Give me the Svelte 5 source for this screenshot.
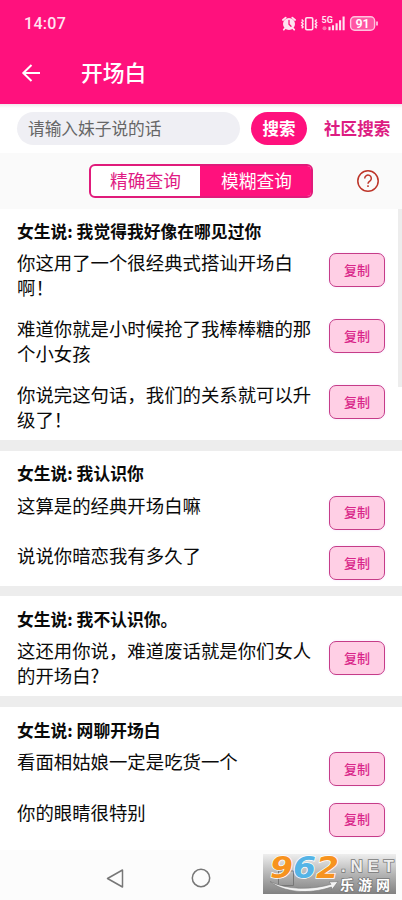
<script lang="ts">
  let keyword = $state("");
  let mode = $state("fuzzy");

  const groups = [
    {
      title: "我觉得我好像在哪见过你",
      replies: [
        "你这用了一个很经典式搭讪开场白啊！",
        "难道你就是小时候抢了我棒棒糖的那个小女孩",
        "你说完这句话，我们的关系就可以升级了！",
      ],
    },
    { title: "我认识你", replies: ["这算是的经典开场白嘛", "说说你暗恋我有多久了"] },
    { title: "我不认识你。", replies: ["这还用你说，难道废话就是你们女人的开场白?"] },
    { title: "网聊开场白", replies: ["看面相姑娘一定是吃货一个", "你的眼睛很特别"] },
  ];

  function copy(text: string) {
    navigator.clipboard?.writeText(text);
  }
</script>

<div class="screen">
  <header>
    <div class="status">
      <span class="time">14:07</span>
      <svg class="indicators" width="100" height="18" viewBox="0 0 100 18">
        <!-- alarm -->
        <g stroke="#ffe3f1" fill="none" stroke-linecap="round">
          <circle cx="8" cy="9" r="6" fill="#ffe3f1" stroke="none" />
          <path d="M1.9 5 4.7 2.6M14.1 5 11.3 2.6M3.9 13.5 2.8 14.7M12.1 13.5l1.1 1.2" stroke-width="1.8" />
          <path d="M8 5.5v3.7l2 2" stroke="#ff117d" stroke-width="1.3" />
        </g>
        <!-- vibrate -->
        <g stroke="#ffe3f1" fill="none" stroke-width="1.4">
          <rect x="24.7" y="2.7" width="7" height="12" rx="1.2" stroke-width="1.6" />
          <path d="M20.7 4.5l1.4 1.5-1.4 1.5 1.4 1.5-1.4 1.5 1.4 1.5-1.4 1.3M35.7 4.5l-1.4 1.5 1.4 1.5-1.4 1.5 1.4 1.5-1.4 1.5 1.4 1.3" />
        </g>
        <!-- signal -->
        <text x="40.500" y="8.300" class="net">5G</text>
        <circle cx="43.5" cy="13.3" r="2" fill="#ff6fb0" />
        <path d="M48.5 15.3v-3.5M52 15.3v-5M55.6 15.3V8.2M59.1 15.3V5.3M62.6 15.3V1.5" stroke="#ffe3f1" stroke-width="2.1" />
        <!-- battery -->
        <rect x="69.6" y="1.7" width="24" height="13.6" rx="4" fill="#ff56a3" stroke="#ffc3df" stroke-width="1.4" />
        <path d="M96 6.5v4" stroke="#ffc3df" stroke-width="1.8" />
        <text x="81.6" y="12.9" text-anchor="middle" class="level">91</text>
      </svg>
    </div>
    <div class="appbar">
      <button class="back" aria-label="返回">
        <svg width="20" height="20" viewBox="0 0 20 20" fill="none" stroke="#fff" stroke-width="2">
          <path d="M19 10H2.5M10.5 2 2.3 10l8.2 8" />
        </svg>
      </button>
      <h1>开场白</h1>
    </div>
  </header>

  <div class="search">
    <input bind:value={keyword} placeholder="请输入妹子说的话" />
    <button class="go">搜索</button>
    <button class="community">社区搜索</button>
  </div>

  <div class="modes">
    <div class="segment">
      <button class:active={mode === "exact"} onclick={() => (mode = "exact")}>精确查询</button>
      <button class:active={mode === "fuzzy"} onclick={() => (mode = "fuzzy")}>模糊查询</button>
    </div>
    <svg class="help" width="24" height="24" viewBox="0 0 24 24" fill="none" stroke="#bd3428" stroke-width="1.5">
      <circle cx="12" cy="12" r="10.2" />
      <path d="M8.7 9.4a3.3 3.3 0 1 1 5.3 2.6c-1.2.9-2 1.4-2 2.8M12 16.3v1.7" />
    </svg>
  </div>

  <main>
    {#each groups as group}
      <section>
        <h2>女生说: {group.title}</h2>
        {#each group.replies as reply}
          <div class="reply">
            <p>{reply}</p>
            <button class="copy" onclick={() => copy(reply)}>复制</button>
          </div>
        {/each}
      </section>
    {/each}
    <div class="thumb"></div>
  </main>

  <nav>
    <svg width="402" height="50" viewBox="0 0 402 50" fill="none" stroke="#777" stroke-width="1.5" stroke-linejoin="round">
      <path d="M122.5 20v17l-15-8.5z" />
      <circle cx="201" cy="28" r="8.7" />
    </svg>
    <svg class="mark" width="133" height="40" viewBox="0 0 133 40">
      <defs>
        <linearGradient id="shade" x2="0" y2="1">
          <stop offset="0" stop-color="#eee" />
          <stop offset="0.5" stop-color="#b5b5b5" />
          <stop offset="1" stop-color="#818181" />
        </linearGradient>
      </defs>
      <rect width="133" height="40" fill="url(#shade)" />
      <path d="M15.5 17h15v14.5h-15z" fill="none" stroke="#777" />
      <g class="digits">
        <text x="7" y="24" textLength="23" lengthAdjust="spacingAndGlyphs" fill="#f7931e">9</text>
        <text x="30" y="24" textLength="23" lengthAdjust="spacingAndGlyphs" fill="#55b4e6">6</text>
        <text x="53" y="24" textLength="23" lengthAdjust="spacingAndGlyphs" fill="#f7931e">2</text>
      </g>
      <path d="M7 27.5c17 8.500 42 8.500 61 2.800l-2-2.300 9-.5-6 8-.5-2.500C45 41 20 38 7 27.500z" fill="#f4f4f4" stroke="#777" stroke-width=".6" />
      <text class="net-name" x="78" y="18" textLength="53" lengthAdjust="spacing">.NET</text>
      <text class="site" x="77" y="36" textLength="50">乐游网</text>
    </svg>
  </nav>
</div>

<style>
  :global(body) { margin: 0; }
  .screen { width: 402px; height: 900px; display: flex; flex-direction: column; overflow: hidden;
    background: #fff; color: #0a0a0a; font-family: "Noto Sans CJK SC", sans-serif; }
  button { border: 0; padding: 0; background: none; font-family: inherit; cursor: pointer; }
  h1, h2, p { margin: 0; }

  header { height: 104px; flex: none; box-sizing: border-box; background: #ff117d; color: #fff; }
  .status { display: flex; justify-content: space-between; align-items: center;
    height: 48px; padding: 0 21px 0 24px; }
  .time { font: 500 16px/20px Roboto, sans-serif; letter-spacing: 0.3px; color: #ffe3f1; }
  .net { font: 700 9px Roboto, sans-serif; fill: #ffe3f1; }
  .level { font: 600 12.5px Roboto, sans-serif; fill: #fff; }
  .appbar { display: flex; align-items: center; height: 49px; padding-left: 21px; }
  .back { display: flex; width: 60px; }
  h1 { padding-bottom: 2px; font-size: 21.8px; line-height: 30px; font-weight: 500; }

  .search { display: flex; align-items: center; flex: none; box-sizing: border-box; height: 49px;
    padding: 0 11px 0 17px; background: linear-gradient(#f0e8ec, #fff 4px); }
  input { width: 223px; height: 33px; box-sizing: border-box; border: 0; border-radius: 17px;
    padding: 0 11px 2px; background: #efeff4; font: 16.7px "Noto Sans CJK SC", sans-serif; outline: none; }
  input::placeholder { color: #666; opacity: 1; }
  .go { width: 56px; height: 33px; margin: 0 17px 0 11px; padding-bottom: 2px; border-radius: 17px;
    background: #ff117d; color: #fff; font-size: 16.5px; font-weight: 700; }
  .community { padding-bottom: 2px; color: #dd1c82; font-size: 16.6px; font-weight: 700;
    white-space: nowrap; }

  .modes { display: flex; align-items: center; flex: none; height: 56px; padding-left: 89px;
    background: #fafafa; }
  .segment { display: flex; width: 224px; height: 34px; box-sizing: border-box; overflow: hidden;
    border: 2px solid #e01b7b; border-radius: 6px; background: #fff; }
  .segment button { flex: 1; color: #e01b84; font-size: 17.7px; line-height: 28px; padding-bottom: 2px; }
  .segment .active { background: #ff117d; color: #fff; }
  .segment button:last-child { padding-left: 2px; }
  .help { margin-left: 43px; }

  main { position: relative; flex: none; height: 641px; overflow: hidden; background: #ededed; }
  section { padding: 10.5px 17px 0; background: #fff; }
  section + section { margin-top: 10.7px; }
  section:first-child { padding-top: 9.5px; }
  section:nth-last-child(2) { padding-bottom: 20px; }
  h2 { height: 32.5px; font-size: 16.8px; line-height: 25px; font-weight: 700; }
  .reply { display: flex; justify-content: space-between; align-items: flex-start; }
  .reply + .reply { margin-top: 9px; }
  p { width: 298px; margin-top: -1px; padding-bottom: 9px; font-size: 18.4px; line-height: 24.5px; }
  .copy { width: 56px; height: 34px; flex: none; box-sizing: border-box; margin: 2px 0 5.5px;
    padding-bottom: 2px; border: 1.5px solid #c63c88; border-radius: 7px; background: #ffcfe5;
    color: #d9268a; font-size: 13px; font-weight: 500; box-shadow: 0 0 3px #f5e8ff; }
  .thumb { position: absolute; top: 0; right: 0; width: 4px; height: 178px; background: #ededed; }

  nav { position: relative; flex: none; height: 50px; background: #fcfcfc; }
  .mark { position: absolute; left: 263px; top: 4px; overflow: visible; }
  .digits { font: italic 700 31px "DejaVu Sans", sans-serif; stroke: #fff; stroke-width: 1.5px;
    paint-order: stroke; }
  .net-name { font: 700 17px "Liberation Sans", sans-serif; fill: #eee; stroke: #777;
    stroke-width: 1.5px; paint-order: stroke; }
  .site { font: 700 14px "Noto Sans CJK SC", sans-serif; fill: #fff; stroke: #777;
    stroke-width: 1.5px; paint-order: stroke; }
</style>
